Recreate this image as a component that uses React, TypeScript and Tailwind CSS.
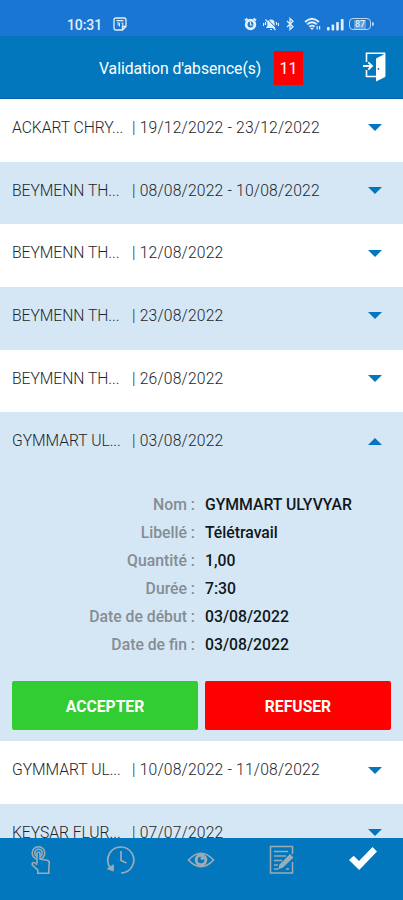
import type { ReactNode } from "react";
import { clsx } from "clsx";

type Absence = {
  name: string;
  dates: string;
  open?: boolean;
};

const absences: Absence[] = [
  { name: "ACKART CHRY...", dates: "19/12/2022 - 23/12/2022" },
  { name: "BEYMENN TH...", dates: "08/08/2022 - 10/08/2022" },
  { name: "BEYMENN TH...", dates: "12/08/2022" },
  { name: "BEYMENN TH...", dates: "23/08/2022" },
  { name: "BEYMENN TH...", dates: "26/08/2022" },
  { name: "GYMMART UL...", dates: "03/08/2022", open: true },
  { name: "GYMMART UL...", dates: "10/08/2022 - 11/08/2022" },
  { name: "KEYSAR FLUR...", dates: "07/07/2022" },
];

const details = [
  { label: "Nom :", value: "GYMMART ULYVYAR" },
  { label: "Libellé :", value: "Télétravail" },
  { label: "Quantité :", value: "1,00" },
  { label: "Durée :", value: "7:30" },
  { label: "Date de début :", value: "03/08/2022" },
  { label: "Date de fin :", value: "03/08/2022" },
];

function StatusBar() {
  return (
    <div className="flex h-9 shrink-0 items-center bg-[#1976d2] pt-3 pl-[67px] pr-[29px] text-[#e3effa]">
      <span className="w-[46px] pt-px text-[14px] leading-none font-medium tracking-[-0.1px]">10:31</span>
      {/* Calendar */}
      <svg width="14" height="14" viewBox="0 0 14 14" fill="none" stroke="currentColor" strokeWidth="1.3">
        <path d="M3 1H11Q13 1 13 3V9.5L9.5 13H3Q1 13 1 11V3Q1 1 3 1ZM13 9.5H9.5V13M3.5 3.6H10.5" />
        <path d="M4 6H6.5V9.5M4.4 7.8H6.5M8.5 6H9.8V9" strokeWidth="1" />
      </svg>
      <div className="ml-auto flex items-center">
        {/* Alarm */}
        <svg className="mr-[6px]" width="13" height="14" viewBox="0 0 13 14" fill="none" stroke="currentColor">
          <circle cx="6.5" cy="7.5" r="4.3" strokeWidth="2.8" />
          <path d="M1 3.5L3.5 1.5M9.5 1.5L12 3.5" strokeWidth="2" />
          <path d="M6.5 5V8H8.5" strokeWidth="1.2" />
        </svg>
        {/* Silent */}
        <svg className="mr-[7px]" width="16" height="14" viewBox="0 0 16 14" fill="none" stroke="currentColor" strokeWidth="1.2">
          <path d="M4 10.5L5 9V6Q5 3 8 3Q11 3 11 6V9L12 10.5Z" fill="currentColor" />
          <path d="M7 12.5H9M.5 6V9M2.5 5V8M15.5 6V9M13.5 5V8" />
          <path d="M4 1.5L14 12" stroke="#1976d2" strokeWidth="1" />
          <path d="M2.5 2.5L12.5 13" />
        </svg>
        {/* Bluetooth */}
        <svg className="mr-[10px]" width="8" height="14" viewBox="0 0 8 14" fill="none" stroke="currentColor" strokeWidth="1.3">
          <path d="M1 4L7 9.8L4 12.5V1.5L7 4.2L1 10" />
        </svg>
        {/* Wifi */}
        <svg className="mr-[5px]" width="18" height="14" viewBox="0 0 18 14" fill="none" stroke="currentColor" strokeWidth="1.8">
          <path d="M1 5Q8 -1.5 15 5M3.2 7.4Q8 3.2 12.8 7.4M5.4 9.7Q8 7.5 10.6 9.7" />
          <path d="M6.5 11L8 12.8L9.5 11Z" fill="currentColor" strokeWidth=".5" />
          <path d="M13.2 9V12.5M15.6 9V12.5" strokeWidth="1.2" />
        </svg>
        {/* Signal */}
        <svg className="mr-[5px]" width="17" height="13" viewBox="0 0 17 13" fill="currentColor">
          <rect x="0" y="9" width="2.6" height="3.5" rx=".8" />
          <rect x="4.6" y="6.5" width="2.6" height="6" rx=".8" />
          <rect x="9.2" y="4" width="2.6" height="8.5" rx=".8" />
          <rect x="13.8" y="1" width="2.8" height="11.5" rx=".8" />
        </svg>
        {/* Battery */}
        <div className="flex h-3 w-[22px] items-center justify-center rounded-[4px] border border-[#b9d7f3] text-[9px] leading-none font-medium">
          <span className="bg-[#5b9fe0] px-px">87</span>
        </div>
        <span className="ml-px h-1 w-0.5 rounded-r bg-[#b9d7f3]" />
      </div>
    </div>
  );
}

function Header() {
  return (
    <header className="flex h-[63px] shrink-0 items-center border-b border-[#0563ac] bg-[#0277bd] pt-0.5 pr-[17px] pl-[99px] text-white">
      <h1 className="w-[175px] pt-0.5 text-[15.7px] whitespace-nowrap tracking-[-0.02px]">Validation d'absence(s)</h1>
      <span className="flex h-[34px] w-[29px] items-center justify-center bg-[#ff0000] pt-px text-[16px]">11</span>
      {/* Exit door */}
      <svg className="ml-auto -mt-0.5" width="24" height="30" viewBox="0 0 24 30" fill="none" stroke="#fff">
        <path d="M4.5 10V1.2H22.5V24M4.5 18V24.5H14" strokeWidth="1.6" />
        <path d="M14 6.5L23.2 1.8V25L14 29.5Z" fill="#fff" stroke="none" />
        <path d="M1 14H9M6.3 10.3L10 14L6.3 17.7" strokeWidth="1.8" />
        <circle cx="16.5" cy="17" r=".9" fill="#0277bd" stroke="none" />
      </svg>
    </header>
  );
}

function AbsenceDetails() {
  return (
    <div className="px-3">
      <dl className="pt-4">
        {details.map((item) => (
          <div key={item.label} className="flex h-7 items-center text-[15.75px] font-medium">
            <dt className="w-[183px] text-right text-[#858d94]">{item.label}</dt>
            <dd className="ml-[10px] text-[#101820]">{item.value}</dd>
          </div>
        ))}
      </dl>
      <div className="flex gap-[7px] pt-[22px]">
        <button className="h-[49px] flex-1 rounded-[2px] bg-[#32cd32] pt-0.5 text-[15.7px] font-bold text-white">ACCEPTER</button>
        <button className="h-[49px] flex-1 rounded-[2px] bg-[#ff0000] pt-0.5 text-[15.7px] font-bold text-white">REFUSER</button>
      </div>
    </div>
  );
}

function AbsenceRow({ absence, striped }: { absence: Absence; striped: boolean }) {
  return (
    <div
      className={clsx(
        "shrink-0",
        absence.open ? "h-[329px]" : "h-[62.7px]",
        striped ? "bg-[#d5e7f4]" : "bg-white"
      )}
    >
      <div className="flex h-[62.7px] items-center pr-[21px] pb-[5.4px] pl-3 text-[15.7px] font-light text-[#1d252b]">
        <span className="w-[120px] tracking-[-0.04px]">{absence.name}</span>
        <span className="flex-1 tracking-[0.17px] whitespace-nowrap">| {absence.dates}</span>
        <svg className={clsx(absence.open && "rotate-180")} width="14" height="7" viewBox="0 0 14 7">
          <path d="M0 0H14L7 7Z" fill="#0277bd" />
        </svg>
      </div>
      {absence.open && <AbsenceDetails />}
    </div>
  );
}

function NavItem({ children }: { children: ReactNode }) {
  return <button className="flex flex-1 justify-center pt-[7px] text-[#9dabb5]">{children}</button>;
}

function BottomNav() {
  return (
    <nav className="flex h-[62px] shrink-0 bg-[#0277bd]">
      <NavItem>
        {/* Touch */}
        <svg width="30" height="30" viewBox="0 0 30 30" fill="none" stroke="currentColor" strokeWidth="1.6">
          <circle cx="13.5" cy="8" r="3.7" />
          <circle cx="13.5" cy="8" r="6.3" />
          <path d="M12 18.5V8.5Q12 7 13.5 7T15 8.5V14L22 15.2Q24.5 15.8 24.3 18L23.8 23V28.3H12.8V25.2L7.5 20Q6.5 18.4 8 17.7T12 19.8" fill="#0277bd" />
        </svg>
      </NavItem>
      <NavItem>
        {/* History */}
        <svg width="30" height="30" viewBox="0 0 30 30" fill="none" stroke="currentColor" strokeWidth="1.7">
          <path d="M4.5 23.5Q-.5 16 3.5 8.5A13 13 0 1 1 15 28" />
          <path d="M1 23.6L7.3 26V19.5" fill="currentColor" strokeWidth="1" />
          <path d="M15 6V15.5L20.5 18" />
        </svg>
      </NavItem>
      <NavItem>
        {/* Eye */}
        <svg width="28" height="30" viewBox="0 0 28 30" fill="none" stroke="currentColor" strokeWidth="1.7">
          <path d="M1.5 15Q14 1.5 26.5 15Q14 28.5 1.5 15Z" />
          <circle cx="14" cy="15" r="4.8" strokeWidth="3" />
          <circle cx="15.3" cy="13.3" r="1.8" fill="currentColor" stroke="none" />
        </svg>
      </NavItem>
      <NavItem>
        {/* Form */}
        <svg width="28" height="30" viewBox="0 0 28 30" fill="none" stroke="currentColor" strokeWidth="1.5">
          <path d="M24.5 9V1.5H2.5V28H24.5V17M6 6.5H20M6 11H18M6 15.5H14M6 20H10M6 24H10M18 24H21" />
          <path d="M10 24.5L11.5 19.5L22 9L25.5 12.5L15 22.5Z" fill="currentColor" stroke="none" />
        </svg>
      </NavItem>
      <NavItem>
        {/* Validate */}
        <svg width="30" height="30" viewBox="0 0 30 30" fill="#fff">
          <path d="M1 15L5.7 10.8L11 16L24.5 2L29 6.5L11.2 25Z" />
        </svg>
      </NavItem>
    </nav>
  );
}

export default function App() {
  return (
    <div className="flex h-[900px] w-[403px] flex-col overflow-hidden bg-white font-['Roboto',sans-serif]">
      <StatusBar />
      <Header />
      <main className="flex min-h-0 flex-1 flex-col overflow-hidden">
        {absences.map((absence, i) => (
          <AbsenceRow key={i} absence={absence} striped={i % 2 === 1} />
        ))}
      </main>
      <BottomNav />
    </div>
  );
}
